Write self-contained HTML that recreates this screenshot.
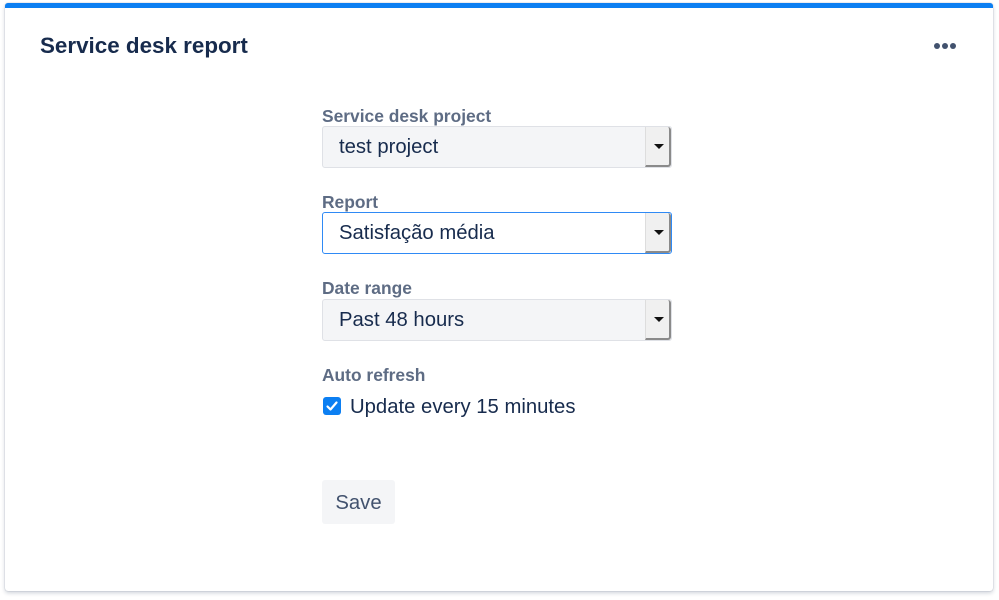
<!DOCTYPE html>
<html><head><meta charset="utf-8"><style>
*{box-sizing:border-box;margin:0;padding:0}
body{width:999px;height:600px;background:#fff;font-family:"Liberation Sans",sans-serif;position:relative;overflow:hidden}
.card{position:absolute;left:5px;top:3px;width:988px;height:588px;background:#fff;border-top:5px solid #0c7ff2;border-radius:3px;box-shadow:0 2px 4px rgba(9,30,66,.2),0 0 1px rgba(9,30,66,.35)}
h1{position:absolute;left:40px;top:33px;font-size:22.4px;font-weight:bold;color:#172b4d}
.dots{position:absolute;left:934px;top:43px}
.dots i{display:inline-block;width:6px;height:6px;border-radius:50%;background:#42526e;margin-right:2px;float:left}
.lbl{position:absolute;left:322px;font-size:17.4px;font-weight:bold;color:#5e6c84}
.sel{position:absolute;left:322px;width:350px;height:42px;background:#f4f5f7;border:1px solid #dfe1e6;border-radius:3px;font-size:20.3px;color:#172b4d;padding:9px 0 0 16px}
.sel.f{background:#fff;border:1.5px solid #2f8af5}
.btn{position:absolute;right:0;top:0;width:26px;height:40px;background:#f0f0f0;border-left:1px solid #ddd;border-right:2px solid #8a8a8a;border-bottom:2px solid #8a8a8a;border-radius:0 3px 3px 0}
.btn:after{content:"";position:absolute;left:8px;top:17px;border-left:5px solid transparent;border-right:5px solid transparent;border-top:5px solid #111}
.cb{position:absolute;left:323px;top:397px;width:18px;height:18px;background:#0c7ff2;border-radius:3px}
.ct{position:absolute;left:350px;top:396px;font-size:20.3px;color:#172b4d}
.save{position:absolute;left:322px;top:480px;width:73px;height:44px;background:#f4f5f7;border-radius:3px;font-size:20.3px;color:#42526e;text-align:center;line-height:46px}
</style></head><body>
<div class="card"></div>
<h1>Service desk report</h1>
<div class="dots"><i></i><i></i><i></i></div>
<div class="lbl" style="top:106px">Service desk project</div>
<div class="sel" style="top:126px">test project<div class="btn"></div></div>
<div class="lbl" style="top:192px">Report</div>
<div class="sel f" style="top:212px">Satisfação média<div class="btn" style="height:40px"></div></div>
<div class="lbl" style="top:278px">Date range</div>
<div class="sel" style="top:299px">Past 48 hours<div class="btn"></div></div>
<div class="lbl" style="top:365px">Auto refresh</div>
<div class="cb"><svg width="18" height="18" viewBox="0 0 18 18"><path d="M4.5 9.5l3 3 6-7" stroke="#fff" stroke-width="2.2" fill="none" stroke-linecap="round" stroke-linejoin="round"/></svg></div>
<div class="ct">Update every 15 minutes</div>
<div class="save">Save</div>
</body></html>
